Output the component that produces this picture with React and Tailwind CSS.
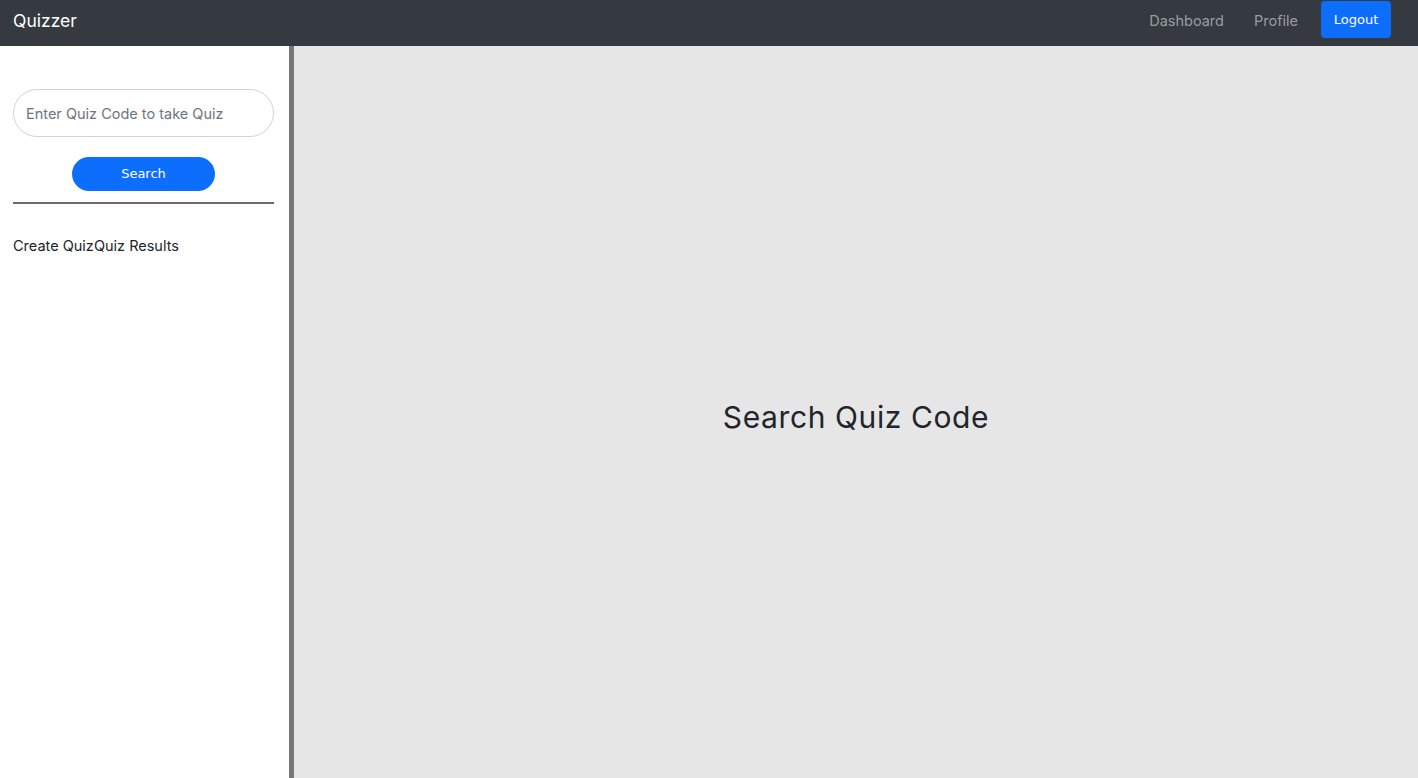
export default function App() {
  return (
    <div className="flex h-[778px] w-[1418px] flex-col overflow-hidden" style={{ fontFamily: 'Inter, "Noto Sans", sans-serif' }}>
      <nav className="flex h-[46px] shrink-0 items-center justify-between bg-[#343a40] pl-[13px] pr-[27px]">
        <span className="mb-[4px] text-[17.5px] text-white">Quizzer</span>
        <div className="flex items-center">
          <span className="mb-[5px] mr-[30px] text-[14.5px] text-[#9a9da0]">Dashboard</span>
          <span className="mb-[5px] mr-[23px] text-[14.5px] text-[#9a9da0]">Profile</span>
          <button className="mb-[7px] h-[37px] w-[70px] rounded-[4px] bg-[#0d6efd] text-[13px] text-white" style={{ fontFamily: '"DejaVu Sans", sans-serif' }}>Logout</button>
        </div>
      </nav>
      <div className="flex min-h-0 flex-1">
        <aside className="w-[294px] shrink-0 border-r-[5px] border-[#777777] bg-white pl-[13px] pr-[15px] pt-[43px]">
          <input
            className="h-[48px] w-full rounded-full border border-[#ced4da] px-[12px] text-[14.5px] text-[#212529] outline-none placeholder:text-[#6c757d]"
            placeholder="Enter Quiz Code to take Quiz"
          />
          <div className="mt-[20px] flex justify-center">
            <button className="h-[34px] w-[143px] rounded-full bg-[#0d6efd] text-[13px] text-white" style={{ fontFamily: '"DejaVu Sans", sans-serif' }}>Search</button>
          </div>
          <hr className="mt-[11px] border-t-2 border-[#6b6b6b]" />
          <div className="mt-[31px] text-[14.5px] text-[#212529]">
            <span>Create Quiz</span><span>Quiz Results</span>
          </div>
        </aside>
        <main className="flex flex-1 items-center justify-center bg-[#e6e6e6] pt-[10px]">
          <h1 className="text-[30px] tracking-[0.6px] text-[#212529]" style={{ fontFamily: 'Inter, sans-serif' }}>Search Quiz Code</h1>
        </main>
      </div>
    </div>
  );
}
